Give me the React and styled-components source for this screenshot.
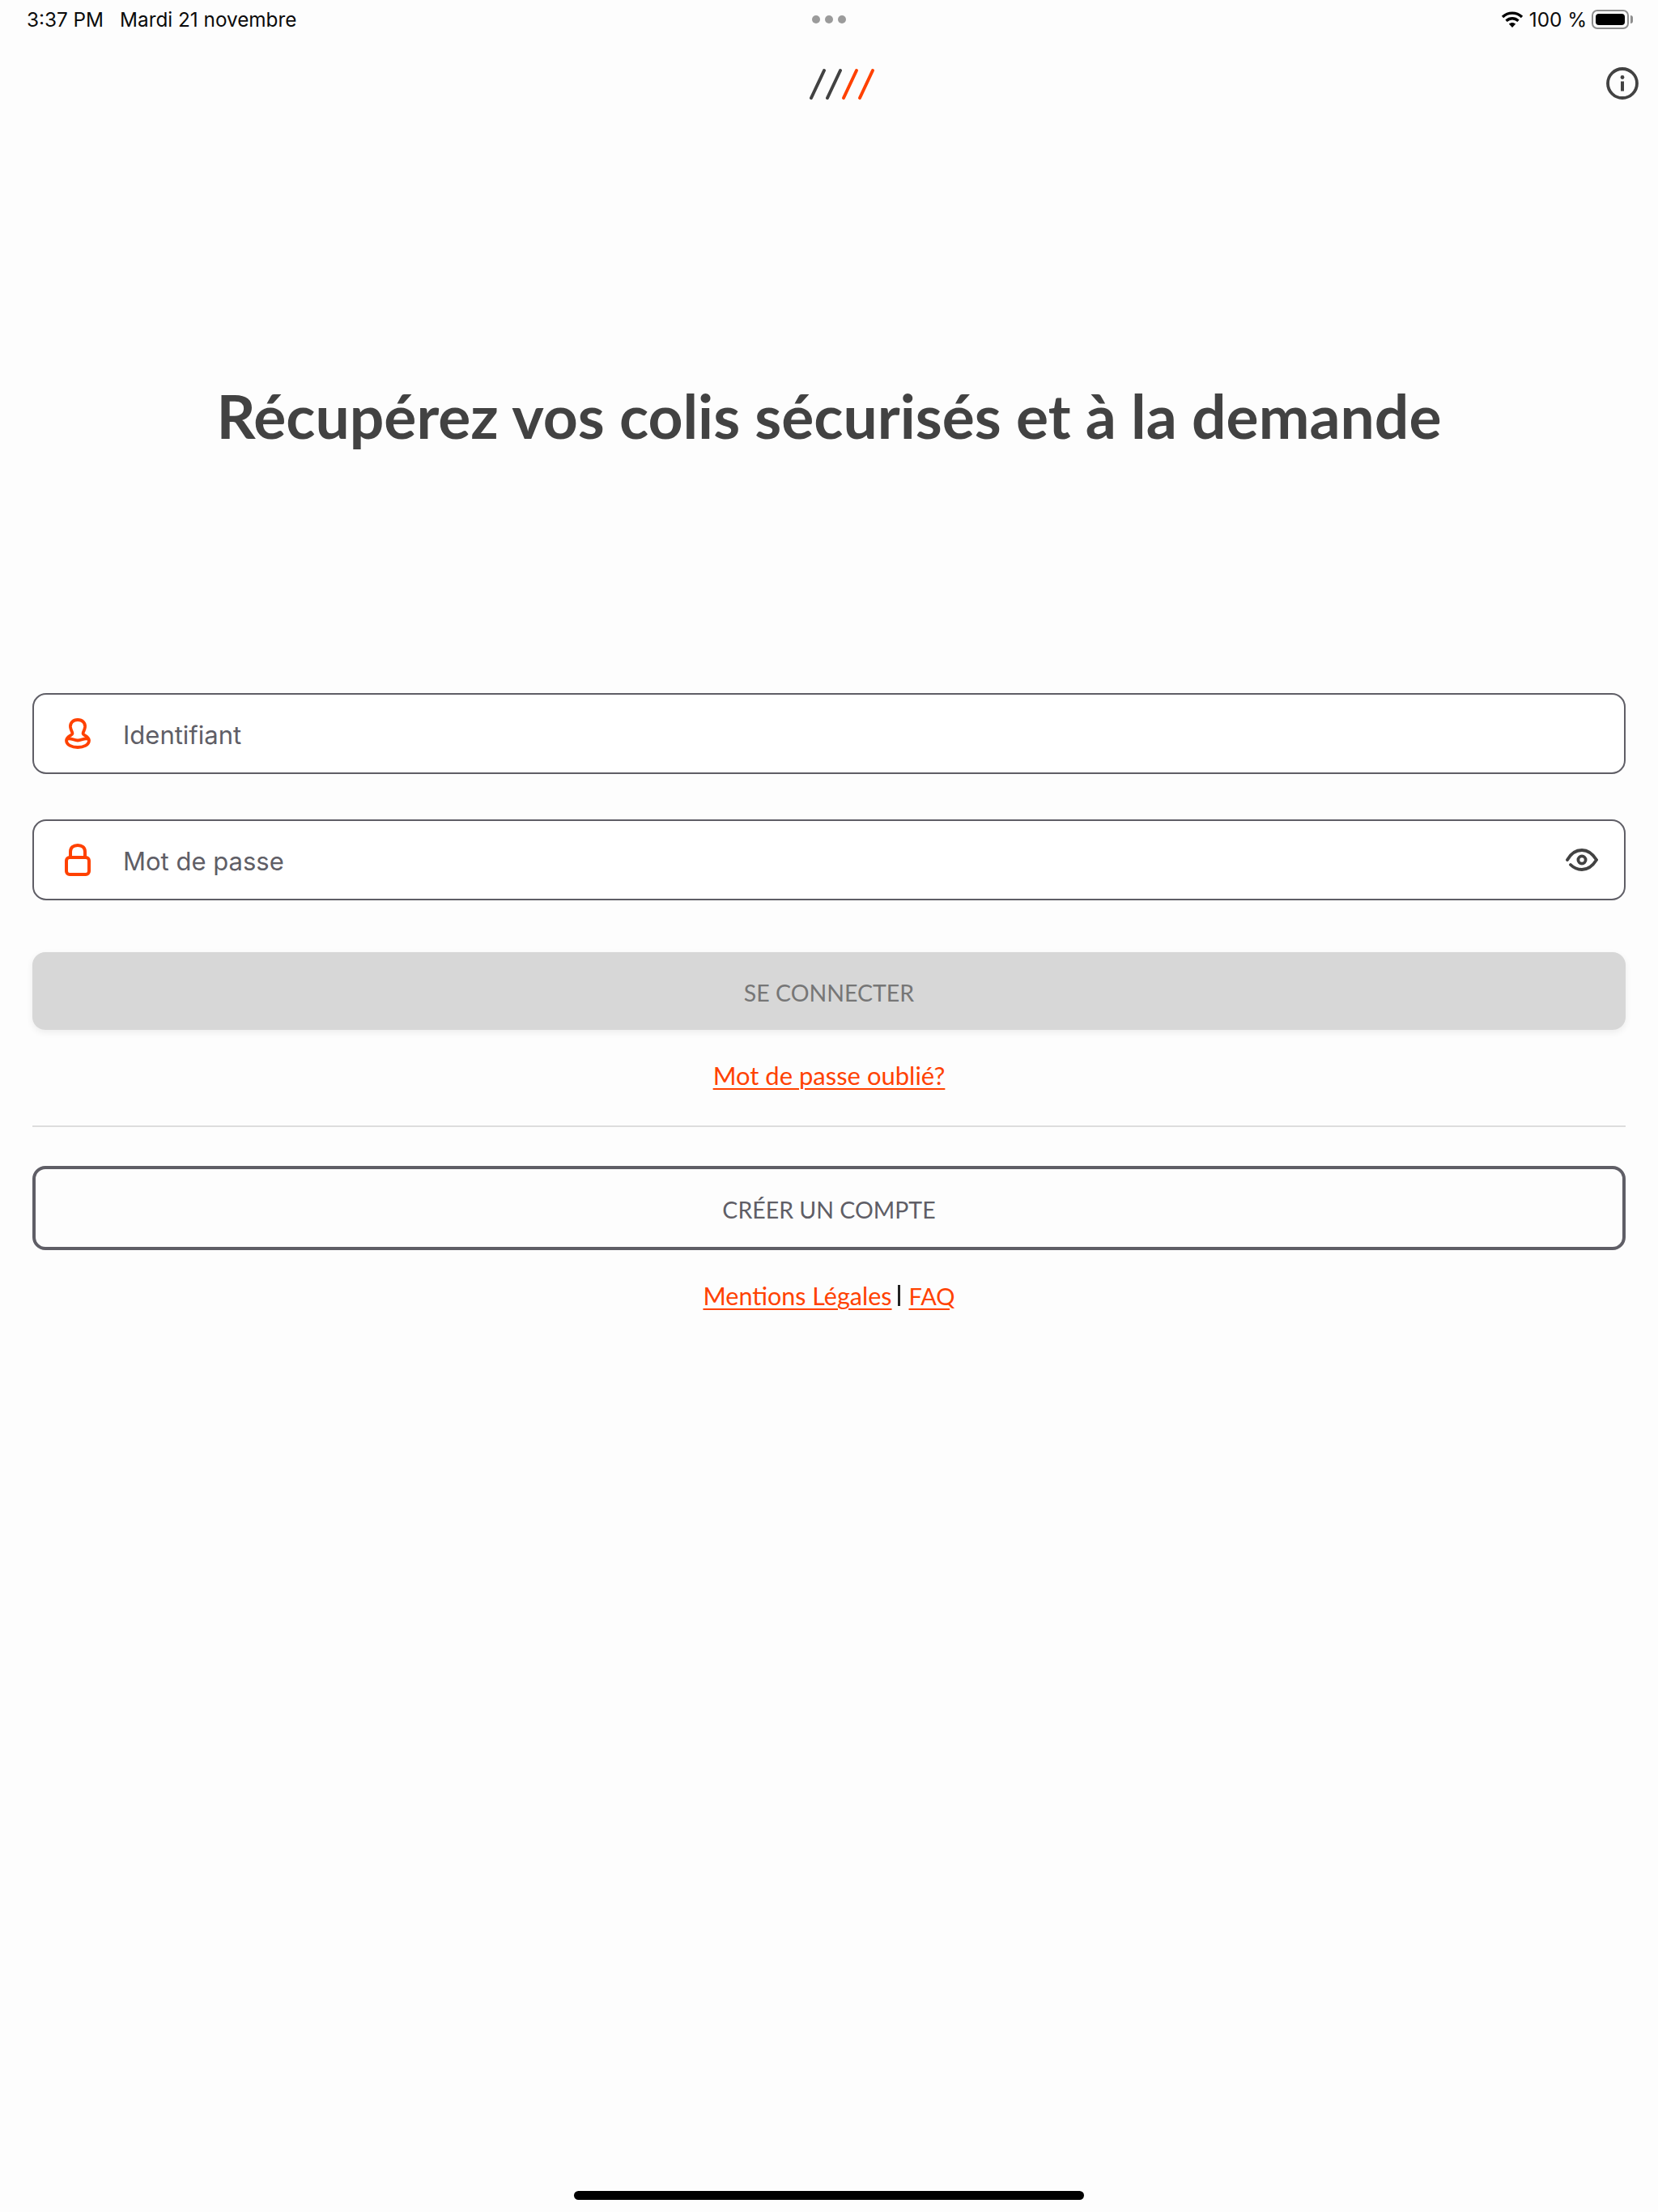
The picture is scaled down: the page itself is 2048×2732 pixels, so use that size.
import React from "react";
import styled, { createGlobalStyle } from "styled-components";

const orange = "#ff4100";
const slate = "#5f5e66";
const dark = "#424242";

const GlobalStyle = createGlobalStyle`
  html, body {
    margin: 0;
    padding: 0;
    background: #fdfdfd;
  }
  * {
    box-sizing: border-box;
  }
`;

const Page = styled.div`
  width: 2048px;
  height: 2732px;
  display: flex;
  flex-direction: column;
  background: #fdfdfd;
  font-family: Lato, "Liberation Sans", sans-serif;
`;

const StatusBar = styled.div`
  height: 48px;
  padding: 0 30px 0 33px;
  display: grid;
  grid-template-columns: 1fr auto 1fr;
  align-items: center;
  font-family: Inter, "Liberation Sans", sans-serif;
  font-size: 24.3px;
  color: #0b0b0b;
`;

const StatusLeft = styled.div`
  display: flex;
  gap: 20px;
`;

const StatusRight = styled.div`
  display: flex;
  align-items: center;
  justify-content: flex-end;
  gap: 7px;
`;

const Dots = styled.div`
  display: flex;
  gap: 6px;
  margin-left: -3px;
`;

const Dot = styled.span`
  width: 10px;
  height: 10px;
  border-radius: 50%;
  background: #9b9b9b;
`;

const Battery = styled.div`
  position: relative;
  width: 46px;
  height: 24px;
  padding: 3px;
  border: 2px solid #8e8e8e;
  border-radius: 7px;
  margin-right: 6px;
  margin-left: -1px;

  &::before {
    content: "";
    display: block;
    height: 100%;
    background: #000;
    border-radius: 4px;
  }

  &::after {
    content: "";
    position: absolute;
    top: 5px;
    right: -7px;
    width: 3px;
    height: 10px;
    background: #8e8e8e;
    border-radius: 0 3px 3px 0;
  }
`;

const Header = styled.header`
  position: relative;
  height: 100px;
  padding: 35px 24px 0 0;
  display: flex;
  justify-content: flex-end;
`;

const Logo = styled.svg`
  position: absolute;
  left: 998px;
  top: 36px;
`;

const Title = styled.h1`
  margin: 323px 0 0;
  text-align: center;
  font-size: 75px;
  line-height: 84px;
  font-weight: 700;
  color: ${dark};
`;

const Form = styled.main`
  padding: 0 40px;
  margin-top: 301px;
  display: flex;
  flex-direction: column;
`;

const Field = styled.label`
  height: 100px;
  margin-bottom: ${({ $gap }) => $gap}px;
  padding: 0 32px 0 38px;
  display: flex;
  align-items: center;
  gap: 40px;
  background: #fff;
  border: 2px solid ${slate};
  border-radius: 17px;
`;

const FieldInput = styled.input`
  flex: 1;
  min-width: 0;
  height: 60px;
  padding: 3px 0 0;
  border: 0;
  outline: 0;
  background: transparent;
  font-family: Inter, "Liberation Sans", sans-serif;
  font-size: 31px;
  color: ${slate};

  &::placeholder {
    color: ${slate};
    opacity: 1;
  }
`;

const FieldIcon = styled.svg`
  flex: none;
`;

const SubmitButton = styled.button`
  height: 96px;
  padding: 4px 0 0;
  border: 0;
  border-radius: 16px;
  background: #d7d7d7;
  box-shadow: 0 3px 8px rgba(0, 0, 0, 0.07);
  font-family: inherit;
  font-size: 28.5px;
  color: #767676;
`;

const OrangeLink = styled.a`
  color: ${orange};
  font-size: ${({ $size }) => $size || 31}px;
  text-decoration: underline;
  text-decoration-thickness: 2px;
  text-underline-offset: 4px;
`;

const ForgotRow = styled.div`
  height: 118px;
  padding-bottom: 6px;
  display: flex;
  align-items: center;
  justify-content: center;
`;

const Divider = styled.hr`
  width: 100%;
  height: 2px;
  margin: 0 0 48px;
  border: 0;
  background: #dddddd;
`;

const CreateButton = styled.button`
  height: 104px;
  padding: 4px 0 0;
  border: 4px solid ${slate};
  border-radius: 16px;
  background: transparent;
  font-family: inherit;
  font-size: 28.5px;
  color: ${slate};
`;

const FooterRow = styled.div`
  margin-top: 38px;
  display: flex;
  justify-content: center;
  align-items: center;
  gap: 7px;
`;

const Separator = styled.span`
  width: 3px;
  height: 26px;
  margin-right: 4px;
  background: #222;
`;

const Spacer = styled.div`
  flex: 1;
`;

const HomeBar = styled.div`
  width: 630px;
  height: 11px;
  margin: 0 auto 15px;
  border-radius: 6px;
  background: #000;
`;

const WifiIcon = () => (
  <svg width="28" height="22" viewBox="0 0 28 22" aria-hidden="true">
    <path
      fill="none"
      stroke="#000"
      strokeWidth="3.4"
      d="M2 8 C 9 1.5, 19 1.5, 26 8 M6.5 12.8 C 11 8.8, 17 8.8, 21.5 12.8"
    />
    <path d="M9.8 16.6 C 12.5 14.4, 15.5 14.4, 18.2 16.6 L14 21 Z" fill="#000" />
  </svg>
);

const LogoMark = () => (
  <Logo width="86" height="40" viewBox="0 0 86 40" aria-hidden="true">
    <g fill="none" strokeWidth="4" strokeLinecap="round">
      <path d="M4 37 L20 3 M24 37 L40 3" stroke={dark} />
      <path d="M44 37 L60 3 M64 37 L80 3" stroke={orange} />
    </g>
  </Logo>
);

const InfoIcon = () => (
  <svg width="40" height="40" viewBox="0 0 40 40" aria-hidden="true">
    <circle cx="20" cy="20" r="18" fill="none" stroke={dark} strokeWidth="3.8" />
    <circle cx="20" cy="12.5" r="2.4" fill={dark} />
    <rect x="18" y="17.5" width="4" height="12" fill={dark} />
  </svg>
);

const UserIcon = () => (
  <FieldIcon width="32" height="38" viewBox="0 0 32 38" aria-hidden="true">
    <path
      fill="none"
      stroke={orange}
      strokeWidth="3.8"
      strokeLinejoin="round"
      d="M16 2 C 10 2, 6.5 6, 7 11 C 7.5 15, 9.5 17, 9.5 19 C 9.5 21, 2 22.5, 2 27.5 C 2 33, 9 36, 16 36 C 23 36, 30 33, 30 27.5 C 30 22.5, 22.5 21, 22.5 19 C 22.5 17, 24.5 15, 25 11 C 25.5 6, 22 2, 16 2 Z"
    />
    <path
      fill="none"
      stroke={orange}
      strokeWidth="3.8"
      d="M3 26 C 7 23.5, 11 27.5, 16 27.5 C 21 27.5, 25 23.5, 29 26"
    />
  </FieldIcon>
);

const LockIcon = () => (
  <FieldIcon width="32" height="40" viewBox="0 0 32 40" aria-hidden="true">
    <rect x="2" y="17" width="28" height="21" rx="4" fill="none" stroke={orange} strokeWidth="4" />
    <path
      fill="none"
      stroke={orange}
      strokeWidth="4"
      d="M7 17 V10 C 7 5, 10.5 2, 16 2 C 21.5 2, 25 5, 25 10 V17"
    />
  </FieldIcon>
);

const EyeIcon = () => (
  <FieldIcon width="40" height="28" viewBox="0 0 40 28" aria-hidden="true">
    <path
      fill="none"
      stroke={dark}
      strokeWidth="3.8"
      strokeLinecap="round"
      d="M2 14 C 7 5, 13 2, 20 2 C 27 2, 33 6, 38 14 C 33 22, 27 26, 20 26 C 14 26, 10 24, 6 20"
    />
    <circle cx="20" cy="14" r="4.6" fill="none" stroke={dark} strokeWidth="3.8" />
  </FieldIcon>
);

export default function App() {
  return (
    <Page>
      <GlobalStyle />
      <StatusBar>
        <StatusLeft>
          <span>3:37 PM</span>
          <span>Mardi 21 novembre</span>
        </StatusLeft>
        <Dots>
          <Dot />
          <Dot />
          <Dot />
        </Dots>
        <StatusRight>
          <WifiIcon />
          <span>100 %</span>
          <Battery />
        </StatusRight>
      </StatusBar>
      <Header>
        <LogoMark />
        <InfoIcon />
      </Header>
      <Title>Récupérez vos colis sécurisés et à la demande</Title>
      <Form>
        <Field $gap={56}>
          <UserIcon />
          <FieldInput placeholder="Identifiant" />
        </Field>
        <Field $gap={64}>
          <LockIcon />
          <FieldInput placeholder="Mot de passe" type="password" />
          <EyeIcon />
        </Field>
        <SubmitButton disabled>SE CONNECTER</SubmitButton>
        <ForgotRow>
          <OrangeLink href="#">Mot de passe oublié?</OrangeLink>
        </ForgotRow>
        <Divider />
        <CreateButton>CRÉER UN COMPTE</CreateButton>
        <FooterRow>
          <OrangeLink href="#" $size={30.5}>Mentions Légales</OrangeLink>
          <Separator />
          <OrangeLink href="#" $size={29}>FAQ</OrangeLink>
        </FooterRow>
      </Form>
      <Spacer />
      <HomeBar />
    </Page>
  );
}
